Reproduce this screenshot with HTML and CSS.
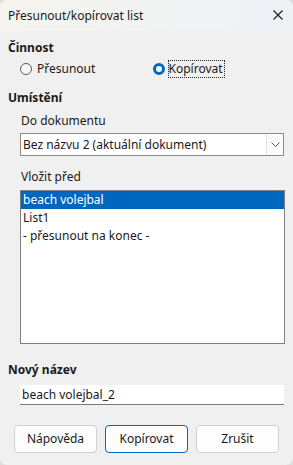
FILE: index.html
```html
<!DOCTYPE html>
<html lang="cs">
<head>
    <meta charset="UTF-8">
    <title>Přesunout/kopírovat list</title>
    <link rel="stylesheet" href="styles.css">
</head>
<body>
    <div class="window">
        <div class="titlebar">
            <span class="title">Přesunout/kopírovat list</span>
            <svg class="close" width="10" height="10" viewBox="0 0 10 10">
                <path d="M0.5 0.5 L9.5 9.5 M9.5 0.5 L0.5 9.5" stroke="#1a1a1a" stroke-width="1.1"/>
            </svg>
        </div>
        <div class="content">
            <div class="heading first">Činnost</div>
            <div class="radios">
                <div class="radio"><span class="dot"></span><span>Přesunout</span></div>
                <div class="radio checked"><span class="dot"></span><span class="focus">Kopírovat</span></div>
            </div>
            <div class="heading place">Umístění</div>
            <div class="label first-label">Do dokumentu</div>
            <div class="combo">
                <span class="combo-text">Bez názvu 2 (aktuální dokument)</span>
                <span class="combo-btn">
                    <svg width="9" height="5" viewBox="0 0 9 5">
                        <path d="M0.5 0.5 L4.5 4.5 L8.5 0.5" fill="none" stroke="#555" stroke-width="1"/>
                    </svg>
                </span>
            </div>
            <div class="label">Vložit před</div>
            <ul class="listbox">
                <li class="selected">beach volejbal</li>
                <li>List1</li>
                <li>- přesunout na konec -</li>
            </ul>
            <div class="heading name">Nový název</div>
            <div class="field">beach volejbal_2</div>
            <div class="buttons">
                <div class="btn">Nápověda</div>
                <div class="btn default">Kopírovat</div>
                <div class="btn">Zrušit</div>
            </div>
        </div>
    </div>
</body>
</html>
```

FILE: styles.css
```css
* {
    box-sizing: border-box;
}

body, html {
    margin: 0;
    padding: 0;
    background: #dedede;
}

body {
    font-family: "Noto Sans", "Open Sans", sans-serif;
    font-size: 12px;
    line-height: 16px;
    color: #1a1a1a;
}

.window {
    width: 293px;
    height: 465px;
    background: #f0f0f0;
    border-radius: 7px;
    overflow: hidden;
    display: flex;
    flex-direction: column;
}

.titlebar {
    height: 31px;
    flex-shrink: 0;
    display: flex;
    align-items: center;
    justify-content: space-between;
    padding: 0 10px 0 8px;
    background: linear-gradient(90deg, #f5f4ee, #eef1f6);
}

.close {
    margin-top: -2px;
}

.content {
    display: flex;
    flex-direction: column;
    padding: 0 8px;
}

.heading {
    font-weight: bold;
    margin-top: 13px;
}

.heading.first {
    margin-top: 9px;
}

.heading.name {
    margin-top: 18px;
}

.radios {
    display: flex;
    margin-top: 5px;
    padding-left: 12px;
}

.radio {
    display: flex;
    align-items: center;
    width: 134px;
}

.dot {
    width: 12px;
    height: 12px;
    border-radius: 50%;
    border: 1px solid #5c5c5c;
    background: #f7f7f7;
    margin-right: 5px;
    flex-shrink: 0;
}

.radio.checked .dot {
    border: 3.5px solid #0067c0;
    background: #fff;
}

.focus {
    outline: 1px dotted #222;
    outline-offset: 0;
    padding: 0 1px 0 0;
    margin-left: -1px;
}

.label {
    margin-top: 13px;
    padding-left: 13px;
}

.label.first-label {
    margin-top: 7px;
}

.combo {
    margin: 4px 1px 0 12px;
    height: 23px;
    border: 1px solid #8a8a8a;
    background: #fff;
    display: flex;
    align-items: center;
}

.combo-text {
    flex-grow: 1;
    padding-left: 2px;
}

.combo-btn {
    width: 17px;
    height: 21px;
    background: #fbfbfb;
    border-left: 1px solid #e2e2e2;
    display: flex;
    align-items: center;
    justify-content: center;
}

ul {
    list-style: none;
    margin: 0;
    padding: 0;
}

.listbox {
    margin: 5px 0 0 12px;
    height: 154px;
    border: 1px solid #7f7f7f;
    background: #fff;
}

.listbox li {
    height: 18px;
    line-height: 18px;
    padding-left: 2px;
}

.listbox li.selected {
    background: #0067c0;
    color: #fff;
}

.field {
    margin: 7px 1px 0 12px;
    height: 20px;
    line-height: 19px;
    background: #fff;
    border-bottom: 1px solid #7a7a7a;
    padding-left: 2px;
}

.buttons {
    display: flex;
    gap: 8px;
    margin-top: 20px;
    padding-left: 6px;
}

.btn {
    width: 83px;
    height: 28px;
    line-height: 26px;
    text-align: center;
    background: #fdfdfd;
    border: 1px solid #d0d0d0;
    border-radius: 4px;
}

.btn.default {
    border-color: #0067c0;
}
```
